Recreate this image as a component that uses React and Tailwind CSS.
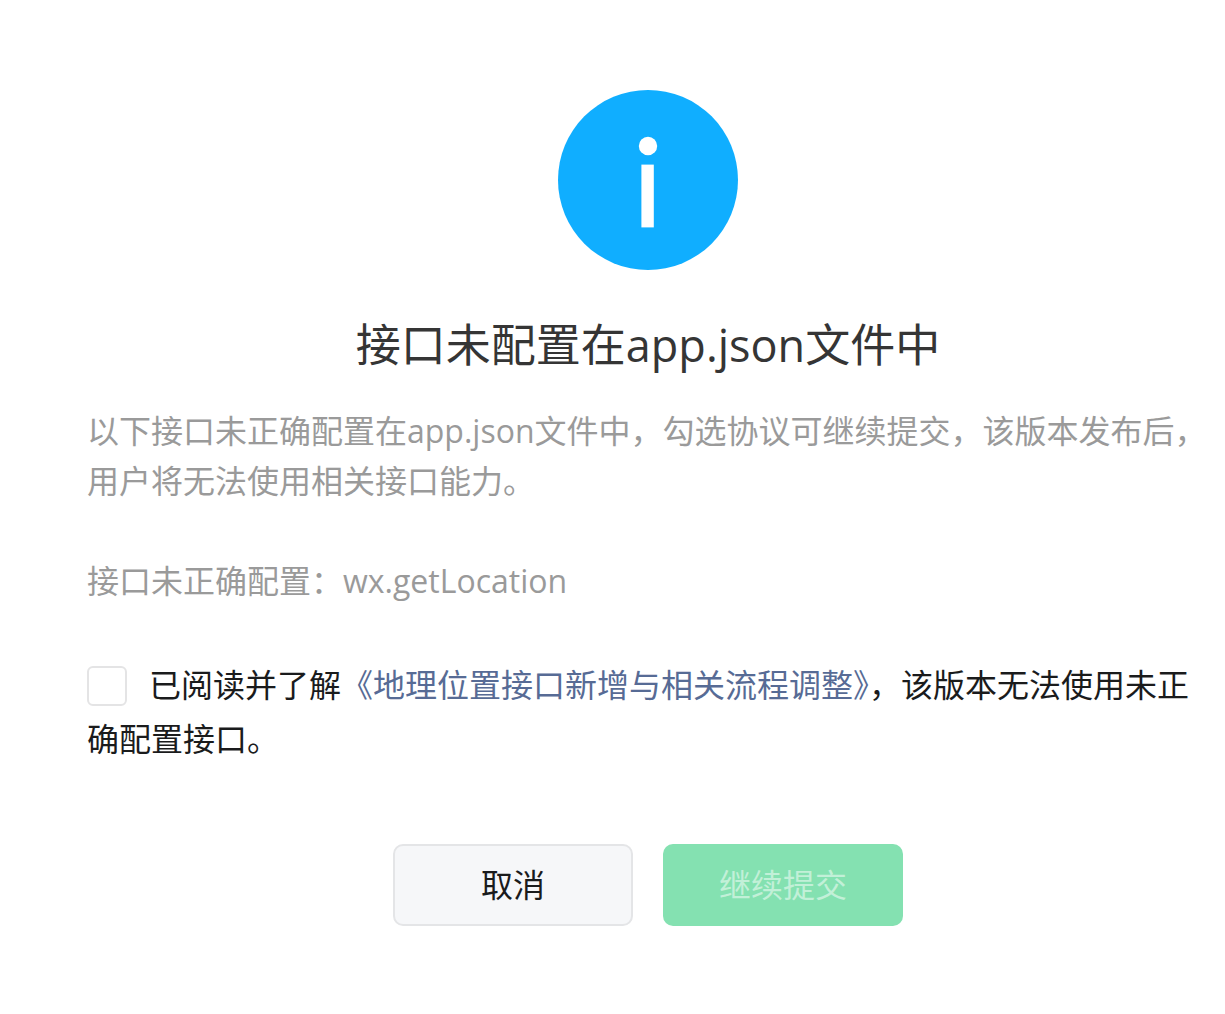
import React, { useState } from "react";

function InfoIcon() {
  return (
    <svg
      viewBox="0 0 180 180"
      className="mx-auto block size-[180px]"
      aria-hidden="true"
    >
      <circle cx="90" cy="90" r="90" fill="#10aeff" />
      <circle cx="90" cy="56" r="9.2" fill="#fff" />
      <rect x="83.4" y="74.6" width="12.4" height="62.8" fill="#fff" />
    </svg>
  );
}

function App() {
  const [agreed, setAgreed] = useState(false);

  return (
    <main className="min-h-screen bg-white pt-[90px] pr-4 pb-[88px] pl-[87px] font-['Open_Sans','Noto_Sans_CJK_SC',sans-serif] text-[32px] text-[#1a1b1c]">
      <InfoIcon />

      <h1 className="mt-10 text-center text-[45px] leading-[70px] text-[#353535]">
        接口未配置在app.json文件中
      </h1>

      <div className="mt-[26px] leading-[50px] text-[#9a9a9a]">
        <p>
          以下接口未正确配置在app.json文件中，勾选协议可继续提交，该版本发布后，用户将无法使用相关接口能力。
        </p>
        <p className="mt-[50px]">接口未正确配置：wx.getLocation</p>
      </div>

      <div className="mt-[52px] leading-[54px]">
        <input
          id="agree"
          type="checkbox"
          checked={agreed}
          onChange={(e) => setAgreed(e.target.checked)}
          className="mr-[22px] size-10 appearance-none rounded-md border-2 border-[#e4e4e5] bg-white align-text-bottom checked:bg-[#07c160]"
        />
        <label htmlFor="agree">
          已阅读并了解
          <a href="#notice" className="text-[#576b95]">
            《地理位置接口新增与相关流程调整》
          </a>
          ，该版本无法使用未正确配置接口。
        </label>
      </div>

      <div className="mt-[78px] flex justify-center gap-[30px]">
        <button
          type="button"
          className="h-[82px] w-60 rounded-[10px] border-2 border-[#e4e5e7] bg-[#f6f7f9]"
        >
          取消
        </button>
        <button
          type="button"
          disabled={!agreed}
          className="h-[82px] w-60 rounded-[10px] bg-[#07c160] text-white disabled:bg-[#84e1b1] disabled:text-[#c2f0d8]"
        >
          继续提交
        </button>
      </div>
    </main>
  );
}

export default App;
